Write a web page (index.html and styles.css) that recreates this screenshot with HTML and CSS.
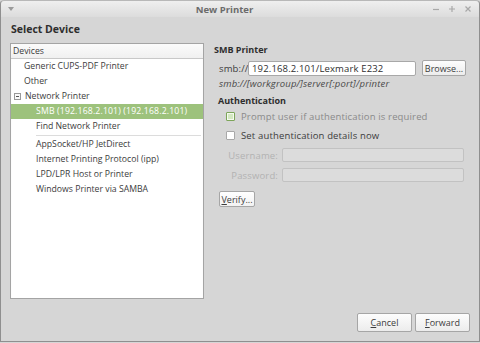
FILE: index.html
```html
<!DOCTYPE html>
<html>
<head>
<meta charset="utf-8">
<link rel="stylesheet" href="styles.css">
</head>
<body>
<div class="window">
  <div class="titlebar">
    <span class="menu-btn">
      <svg width="8" height="6" viewBox="0 0 8 6"><path d="M1 1 L7 1 L4 5 Z" fill="#9a9a9a"/></svg>
    </span>
    <span class="title">New Printer</span>
    <span class="wm-btns">
      <svg width="8" height="8" viewBox="0 0 8 8"><path d="M1 4.5 H7" stroke="#a8a8a8" stroke-width="1.2"/></svg>
      <svg width="8" height="8" viewBox="0 0 8 8"><path d="M1 4 H7 M4 1 V7" stroke="#a8a8a8" stroke-width="1.2"/></svg>
      <svg width="8" height="8" viewBox="0 0 8 8"><path d="M1.5 1.5 L6.5 6.5 M6.5 1.5 L1.5 6.5" stroke="#a8a8a8" stroke-width="1.2"/></svg>
    </span>
  </div>
  <div class="content">
    <h1 class="page-title">Select Device</h1>
    <div class="main">
      <div class="tree">
        <div class="tree-header">Devices</div>
        <div class="tree-row lvl1">Generic CUPS-PDF Printer</div>
        <div class="tree-row lvl1">Other</div>
        <div class="tree-row lvl0"><span class="expander"></span>Network Printer</div>
        <div class="tree-row lvl2 selected">SMB (192.168.2.101) (192.168.2.101)</div>
        <div class="tree-row lvl2">Find Network Printer</div>
        <div class="tree-sep"></div>
        <div class="tree-row lvl2">AppSocket/HP JetDirect</div>
        <div class="tree-row lvl2">Internet Printing Protocol (ipp)</div>
        <div class="tree-row lvl2">LPD/LPR Host or Printer</div>
        <div class="tree-row lvl2">Windows Printer via SAMBA</div>
      </div>
      <div class="details">
        <div class="section-title">SMB Printer</div>
        <div class="uri-row">
          <span class="uri-label">smb://</span>
          <div class="entry uri-entry">192.168.2.101/Lexmark E232</div>
          <button class="btn browse">Browse...</button>
        </div>
        <div class="hint">smb://[workgroup/]server[:port]/printer</div>
        <div class="sub-title">Authentication</div>
        <div class="check-row disabled">
          <span class="check checked"></span>
          <span>Prompt user if authentication is required</span>
        </div>
        <div class="check-row">
          <span class="check"></span>
          <span>Set authentication details now</span>
        </div>
        <div class="field-row">
          <span class="field-label">Username:</span>
          <div class="entry field-entry"></div>
        </div>
        <div class="field-row">
          <span class="field-label">Password:</span>
          <div class="entry field-entry"></div>
        </div>
        <div class="verify-row">
          <button class="btn verify"><u>V</u>erify...</button>
        </div>
      </div>
    </div>
    <div class="actions">
      <button class="btn action"><u>C</u>ancel</button>
      <button class="btn action"><u>F</u>orward</button>
    </div>
  </div>
</div>
</body>
</html>
```

FILE: styles.css
```css
html, body {
  margin: 0;
  padding: 0;
  width: 480px;
  height: 343px;
  overflow: hidden;
  background: #d6d6d6;
  font-family: "Open Sans", "Noto Sans", "DejaVu Sans", sans-serif;
  font-size: 9px;
  color: #3c3c3c;
}

.window {
  box-sizing: border-box;
  width: 480px;
  height: 342px;
  border: 1px solid #8f8f8f;
  border-top-color: #b8b8b8;
  border-radius: 4px 4px 0 0;
  background: #d6d6d6;
  display: flex;
  flex-direction: column;
}

.titlebar {
  height: 16px;
  flex: none;
  background: linear-gradient(#efefef, #dcdcdc);
  border-radius: 4px 4px 0 0;
  display: flex;
  align-items: center;
}

.menu-btn {
  width: 10px;
  margin-left: 6px;
  display: flex;
  align-items: center;
}

.title {
  flex: 1;
  text-align: center;
  font-weight: bold;
  font-size: 9.5px;
  color: #6b6b6b;
}

.wm-btns {
  display: flex;
  gap: 8px;
  margin-right: 7px;
  align-items: center;
}

.content {
  flex: 1;
  display: flex;
  flex-direction: column;
  padding: 0 9px;
}

.page-title {
  margin: 5px 0 0 1px;
  font-size: 10.5px;
  font-weight: bold;
  color: #2e2e2e;
  height: 21px;
  line-height: 14px;
}

.main {
  display: flex;
  gap: 10px;
  height: 256px;
}

.tree {
  box-sizing: border-box;
  width: 194px;
  flex: none;
  background: #fff;
  border: 1px solid #a4a4a4;
  box-shadow: inset 0 1px 1px rgba(0,0,0,0.08);
  font-size: 8.7px;
}

.tree-header {
  height: 14px;
  line-height: 14px;
  padding-left: 2px;
  border-bottom: 1px solid #c8c8c8;
  background: linear-gradient(#fbfbfb, #f0f0f0);
  color: #3c3c3c;
}

.tree-row {
  height: 15px;
  line-height: 15px;
  white-space: nowrap;
  color: #3c3c3c;
  display: flex;
  align-items: center;
}

.tree-row.lvl0 { padding-left: 3px; }
.tree-row.lvl1 { padding-left: 13px; }
.tree-row.lvl2 { padding-left: 25px; }

.tree-row.selected {
  background: #9dc27c;
  color: #fff;
  letter-spacing: 0.15px;
}

.expander {
  box-sizing: border-box;
  width: 7px;
  height: 7px;
  border: 1px solid #9a9a9a;
  margin-right: 4px;
  position: relative;
  background: #fafafa;
}
.expander::after {
  content: "";
  position: absolute;
  left: 1px;
  top: 2px;
  width: 3px;
  height: 1px;
  background: #555;
}

.tree-sep {
  height: 1px;
  margin: 1px 2px 1px 25px;
  background: #dcdcdc;
}

.details {
  flex: 1;
  display: flex;
  flex-direction: column;
}

.section-title {
  font-weight: bold;
  color: #2e2e2e;
  height: 14px;
  line-height: 14px;
}

.uri-row {
  display: flex;
  align-items: center;
  margin-top: 3px;
  height: 16px;
}

.uri-label,
.hint,
.check-row,
.field-label,
.uri-entry {
  font-size: 9.5px;
  letter-spacing: 0.15px;
}

.uri-label {
  width: 34px;
  padding-left: 5px;
  box-sizing: border-box;
}

.entry {
  box-sizing: border-box;
  background: #fff;
  border: 1px solid #a8a8a8;
  border-radius: 2px;
  height: 15px;
  line-height: 13px;
  padding-left: 3px;
  color: #2e2e2e;
}

.uri-entry {
  width: 168px;
}

.btn {
  box-sizing: border-box;
  font-family: inherit;
  font-size: 9px;
  color: #3c3c3c;
  background: linear-gradient(#fdfdfd, #ececec);
  border: 1px solid #a6a6a6;
  border-radius: 2px;
  padding: 0;
  margin: 0;
}

.browse {
  width: 44px;
  height: 16px;
  margin-left: 6px;
}

.hint {
  font-style: italic;
  padding-left: 5px;
  height: 14px;
  line-height: 14px;
  margin-top: 1px;
  color: #4a4a4a;
}

.sub-title {
  font-weight: bold;
  color: #2e2e2e;
  padding-left: 4px;
  height: 13px;
  line-height: 13px;
  margin-top: 3px;
}

.check-row {
  display: flex;
  align-items: center;
  height: 19px;
  padding-left: 12px;
  gap: 6px;
}

.check-row.disabled { color: #8a8a8a; }

.check {
  box-sizing: border-box;
  width: 9px;
  height: 9px;
  border: 1px solid #a8a8a8;
  background: #fff;
  border-radius: 1px;
}

.check.checked {
  border-color: #7da55a;
  background: #d4e8c2;
  box-shadow: inset 0 0 0 1px #f4faee;
}

.field-row {
  display: flex;
  align-items: center;
  height: 20px;
}

.field-label {
  width: 68px;
  text-align: right;
  padding-right: 4px;
  box-sizing: border-box;
  color: #b2b2b2;
}

.field-entry {
  width: 182px;
  background: #dcdcdc;
  border-color: #c2c2c2;
  height: 14px;
}

.verify-row {
  margin-top: 6px;
  padding-left: 5px;
}

.verify {
  width: 36px;
  height: 16px;
  background: linear-gradient(#ffffff, #f2f2f2);
}

.actions {
  display: flex;
  justify-content: flex-end;
  gap: 3px;
  margin-top: 14px;
}

.action {
  width: 55px;
  height: 19px;
}
```
